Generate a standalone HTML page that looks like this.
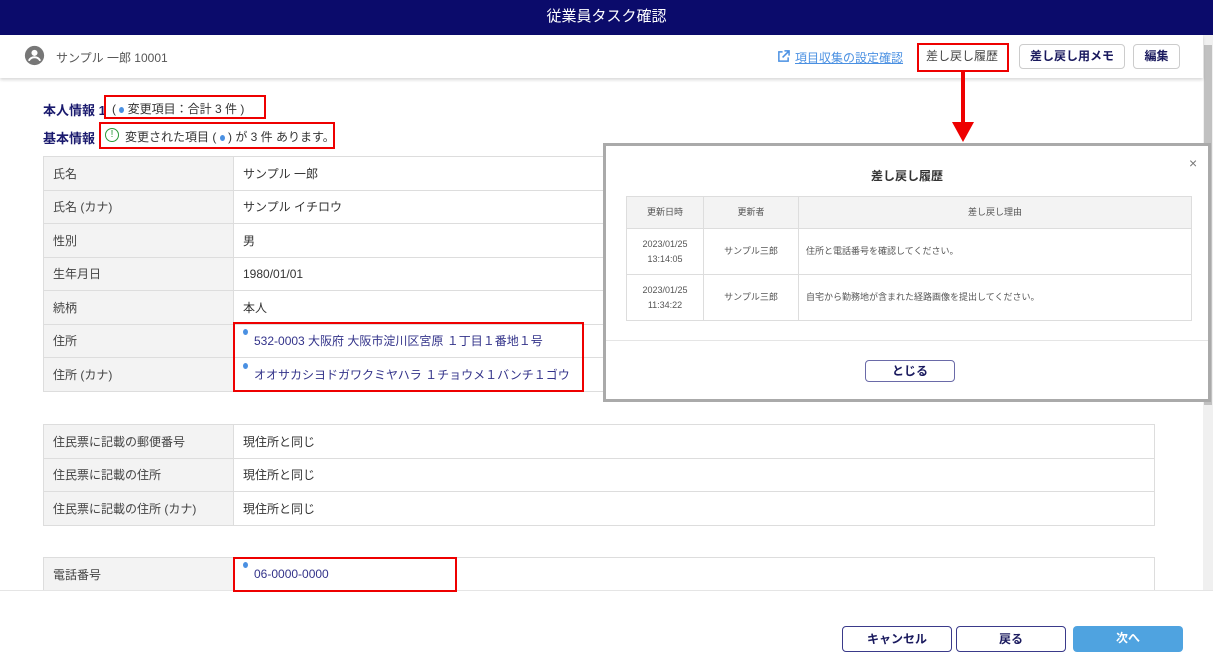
<!DOCTYPE html><html><head><meta charset="utf-8"><style>
*{box-sizing:border-box;margin:0;padding:0}
body{width:1213px;height:665px;overflow:hidden;position:relative;background:#fff;font-family:"Liberation Sans","Noto Sans CJK JP",sans-serif;color:#333;font-size:12px}
.abs{position:absolute}
.hdr{left:0;top:0;width:1213px;height:35px;background:#0b0b6b;color:#fff;font-size:15px;text-align:center;line-height:33px}
.sub{left:0;top:35px;width:1203px;height:43px;background:#fff;box-shadow:0 2px 3px rgba(0,0,0,.15);z-index:2}
.btn{position:absolute;border:1px solid #ccc;border-radius:4px;background:#fff;font-size:12px;font-weight:bold;color:#1a1a5e;text-align:center}
.red{position:absolute;border:2px solid #e00;z-index:5}
table.t{position:absolute;left:43px;width:1112px;border-collapse:collapse}
table.t td{border:1px solid #ddd;height:33.5px;padding:0 9px;font-size:12px}
table.t td.l{background:#f3f3f3;width:190px;color:#444}
.dot{position:absolute;left:-11px;top:-5px;width:5px;height:6px;border-radius:50%;background:#4a90e2}
.v{position:relative;margin-left:11px}
.blue{color:#33338a}
.modal{left:603px;top:143px;width:608px;height:259px;background:#fff;border:3px solid #aaa;z-index:6}
table.m{position:absolute;left:20px;top:50px;width:566px;border-collapse:collapse;font-size:9px;color:#555}
table.m td{border:1px solid #ddd;text-align:center;line-height:15px}
</style></head><body>
<div class="abs hdr">従業員タスク確認</div>
<div class="abs sub">
 <svg class="abs" style="left:24px;top:10px" width="21" height="21" viewBox="0 0 24 24"><circle cx="12" cy="12" r="11" fill="#777"/><circle cx="12" cy="9" r="3.5" fill="#fff"/><path d="M5.5 18c1.5-3 4-4 6.5-4s5 1 6.5 4" stroke="#fff" stroke-width="2.2" fill="none"/></svg>
 <div class="abs" style="left:56px;top:14px;font-size:12px;color:#555">サンプル 一郎 10001</div>
 <svg class="abs" style="left:777px;top:15px" width="13" height="13" viewBox="0 0 14 14"><path d="M6 2H2v10h10V8M8 1h5v5M13 1L6 8" stroke="#4a90e2" stroke-width="1.6" fill="none"/></svg>
 <div class="abs" style="left:795px;top:14px;font-size:12px;color:#4a90e2;text-decoration:underline">項目収集の設定確認</div>
 <div class="btn" style="left:921px;top:10px;width:82px;height:24px;line-height:22px;border:none;font-weight:normal;color:#444">差し戻し履歴</div>
 <div class="btn" style="left:1019px;top:9px;width:106px;height:25px;line-height:23px">差し戻し用メモ</div>
 <div class="btn" style="left:1133px;top:9px;width:47px;height:25px;line-height:23px">編集</div>
</div>
<div class="red" style="left:917px;top:43px;width:92px;height:29px"></div>
<svg class="abs" style="left:948px;top:72px;z-index:7" width="30" height="72"><path d="M13 0h4v50h9L15 70 4 50h9z" fill="#e00"/></svg>
<div class="abs" style="left:1203px;top:35px;width:10px;height:555px;background:#f0f0f0"><div style="margin:10px 1px 0;height:360px;background:#c1c1c1"></div></div>
<div class="abs" style="left:43px;top:100px;font-weight:bold;color:#1a1a6e;font-size:13px">本人情報 1</div>
<div class="abs" style="left:112px;top:100px;font-size:12px">( <span style="display:inline-block;width:5px;height:6px;border-radius:50%;background:#4a90e2;vertical-align:middle"></span> 変更項目：合計 3 件 )</div>
<div class="red" style="left:104px;top:95px;width:162px;height:24px"></div>
<div class="abs" style="left:43px;top:128px;font-weight:bold;color:#1a1a6e;font-size:13px">基本情報</div>
<div class="abs" style="left:105px;top:128px;width:14px;height:14px;border:1.5px solid #2a9a3a;border-radius:50%;color:#2a9a3a;font-size:10px;text-align:center;line-height:11px">!</div>
<div class="abs" style="left:125px;top:128px;font-size:12px">変更された項目 ( <span style="display:inline-block;width:5px;height:6px;border-radius:50%;background:#4a90e2;vertical-align:middle"></span> ) が 3 件 あります。</div>
<div class="red" style="left:99px;top:122px;width:236px;height:27px"></div>
<table class="t" style="top:156px">
<tr><td class="l">氏名</td><td>サンプル 一郎</td></tr>
<tr><td class="l">氏名 (カナ)</td><td>サンプル イチロウ</td></tr>
<tr><td class="l">性別</td><td>男</td></tr>
<tr><td class="l">生年月日</td><td>1980/01/01</td></tr>
<tr><td class="l">続柄</td><td>本人</td></tr>
<tr><td class="l">住所</td><td class="blue"><span class="v"><span class="dot"></span>532-0003 大阪府 大阪市淀川区宮原 １丁目１番地１号</span></td></tr>
<tr><td class="l">住所 (カナ)</td><td class="blue"><span class="v"><span class="dot"></span>オオサカシヨドガワクミヤハラ １チョウメ１バンチ１ゴウ</span></td></tr>
</table>
<div class="red" style="left:233px;top:322px;width:351px;height:70px"></div>
<table class="t" style="top:424px">
<tr><td class="l">住民票に記載の郵便番号</td><td>現住所と同じ</td></tr>
<tr><td class="l">住民票に記載の住所</td><td>現住所と同じ</td></tr>
<tr><td class="l">住民票に記載の住所 (カナ)</td><td>現住所と同じ</td></tr>
</table>
<table class="t" style="top:557px">
<tr><td class="l">電話番号</td><td class="blue"><span class="v"><span class="dot"></span>06-0000-0000</span></td></tr>
</table>
<div class="red" style="left:233px;top:557px;width:224px;height:35px"></div>
<div class="abs" style="left:0;top:590px;width:1213px;height:75px;background:#fff;border-top:1px solid #e5e5e5;z-index:3">
 <div class="btn" style="left:842px;top:35px;width:110px;height:26px;line-height:24px;border-color:#3a3a8a">キャンセル</div>
 <div class="btn" style="left:956px;top:35px;width:110px;height:26px;line-height:24px;border-color:#3a3a8a">戻る</div>
 <div class="btn" style="left:1073px;top:35px;width:110px;height:26px;line-height:24px;border:none;background:#4fa3e0;color:#fff">次へ</div>
</div>
<div class="abs modal">
 <div class="abs" style="left:0;top:21px;width:602px;text-align:center;font-size:12px;font-weight:bold;color:#333">差し戻し履歴</div>
 <div class="abs" style="left:583px;top:9px;font-size:14px;color:#777">×</div>
 <table class="m">
  <tr style="background:#f3f3f3;height:32px"><td style="width:77px">更新日時</td><td style="width:95px">更新者</td><td>差し戻し理由</td></tr>
  <tr style="height:46px"><td>2023/01/25<br>13:14:05</td><td>サンプル三郎</td><td style="text-align:left;padding-left:7px">住所と電話番号を確認してください。</td></tr>
  <tr style="height:46px"><td>2023/01/25<br>11:34:22</td><td>サンプル三郎</td><td style="text-align:left;padding-left:7px">自宅から勤務地が含まれた経路画像を提出してください。</td></tr>
 </table>
 <div class="abs" style="left:0;top:194px;width:602px;border-top:1px solid #e5e5e5"></div>
 <div class="btn" style="left:259px;top:214px;width:90px;height:22px;line-height:20px;border-color:#6a6aa8">とじる</div>
</div>
</body></html>
